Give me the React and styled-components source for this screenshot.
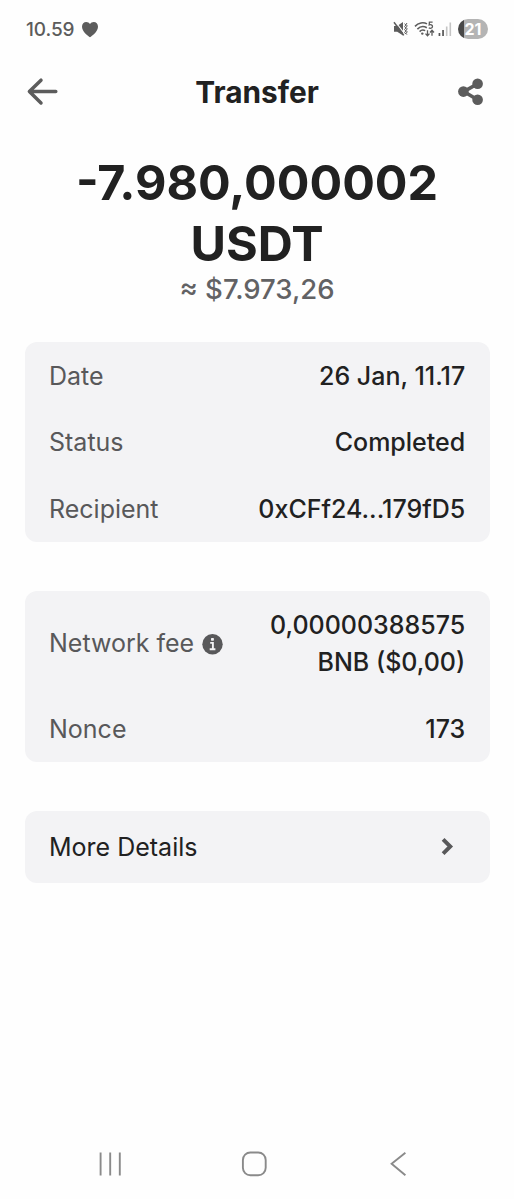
import React from 'react';
import styled, { createGlobalStyle } from 'styled-components';

const feeRows = [
  { label: 'Network fee', value: '0,00000388575 BNB ($0,00)', info: true },
  { label: 'Nonce', value: '173' },
];

const infoRows = [
  { label: 'Date', value: '26 Jan, 11.17' },
  { label: 'Status', value: 'Completed' },
  { label: 'Recipient', value: '0xCFf24...179fD5' },
];

const HeartIcon = () => (
  <svg width="18" height="17" viewBox="0 0 18 17" fill="#5c5c5c">
    <path d="M9 16.3C7.2 15.2 1 10.8 1 5.8C1 3 2.9 1 5.2 1C6.9 1 8.2 1.8 9 3.1C9.8 1.8 11.1 1 12.8 1C15.1 1 17 3 17 5.8C17 10.8 10.8 15.2 9 16.3Z" />
  </svg>
);

const MuteIcon = () => (
  <svg width="16" height="16" viewBox="0 0 16 16" fill="none">
    <path d="M1 5H4.2L10 1V14.6L4.2 10.8H1Z" fill="#5c5c5c" />
    <path d="M2.4 0.6L11.6 12.8" stroke="#fefefe" strokeWidth="1.1" />
    <path d="M1 1.2L10.8 14.4" stroke="#5c5c5c" strokeWidth="1.5" />
    <path d="M11.6 2.6l1.2 1.4-1.2 1.5 1.2 1.5-1.2 1.5 1.2 1.5-1.2 1.5 1.2 1.5M14 2l-.9 1.4 1.1 1.5-1.1 1.5 1.1 1.5-1.1 1.5 1.1 1.5-1.1 1.5 .8 1.2" stroke="#5c5c5c" strokeWidth="1" />
  </svg>
);

const WifiIcon = () => (
  <svg width="21" height="18" viewBox="0 0 21 18" fill="none" stroke="#5c5c5c">
    <path d="M1 6.4C4.4 2.6 9.4 1.8 13 3.9" strokeWidth="1.6" />
    <path d="M3.4 9.1C6 6.4 9.8 5.9 12.8 7.7" strokeWidth="1.6" />
    <path d="M5.6 11.6C7.2 10 9.2 9.7 11.2 10.7" strokeWidth="1.5" />
    <circle cx="8.3" cy="13.6" r="1.2" fill="#5c5c5c" stroke="none" />
    <path d="M18.6 2.1H15.4L15.2 5C16.6 4.3 18.5 4.8 18.5 6.5C18.5 8.4 16 8.8 14.8 7.7" strokeWidth="1.3" />
    <path d="M13.5 10.2V15.6M11.5 13.6L13.5 15.8L15.5 13.6" strokeWidth="1.3" />
    <path d="M18 15.8V10.4M16 12.5L18 10.2L20 12.5" strokeWidth="1.3" />
  </svg>
);

const SignalIcon = () => (
  <svg width="14" height="16" viewBox="0 0 14 16">
    <rect x="-0.4" y="12" width="1.7" height="3" fill="#555" />
    <rect x="3.2" y="9" width="1.7" height="6" fill="#555" />
    <rect x="6.9" y="5.5" width="1.6" height="9.5" fill="#c4c4c4" />
    <rect x="10.5" y="1.5" width="1.6" height="13.5" fill="#c4c4c4" />
  </svg>
);

const BackIcon = () => (
  <svg width="32" height="28" viewBox="0 0 32 28" fill="none" stroke="#5c5c5c" strokeWidth="3.5" strokeLinecap="round" strokeLinejoin="round">
    <path d="M14 2.2L2.4 13.6L14 25M2.4 13.6H28.8" />
  </svg>
);

const ShareIcon = () => (
  <svg width="28" height="28" viewBox="0 0 28 28" fill="#5c5c5c">
    <path d="M20.6 5.7L6.8 13.6L20.6 21.7" fill="none" stroke="#5c5c5c" strokeWidth="3.6" />
    <circle cx="20.6" cy="5.7" r="5.3" />
    <circle cx="6.4" cy="13.6" r="5.3" />
    <circle cx="20.6" cy="21.7" r="5.3" />
  </svg>
);

const InfoIcon = () => (
  <svg width="21" height="21" viewBox="0 0 21 21">
    <circle cx="10.5" cy="10.2" r="10.2" fill="#58585a" />
    <rect x="9" y="4.1" width="2.9" height="2.6" rx="0.6" fill="#f3f3f5" />
    <path d="M8.2 8.9H10.9V15M7.7 15.3H13.4" fill="none" stroke="#f3f3f5" strokeWidth="1.9" />
  </svg>
);

const ChevronIcon = () => (
  <svg width="14" height="20" viewBox="0 0 14 20" fill="none" stroke="#58585a" strokeWidth="3.9">
    <path d="M1.1 2.3L8.3 9.5L1.1 16.7" />
  </svg>
);

const App = () => {
  return (
    <>
      <GlobalStyle />
      <Screen>
        <StatusBar>
          <StatusGroup $gap={7}>
            <Clock>10.59</Clock>
            <HeartIcon />
          </StatusGroup>
          <StatusGroup $gap={4.6}>
            <MuteIcon />
            <WifiIcon />
            <SignalIcon />
            <Battery>21</Battery>
          </StatusGroup>
        </StatusBar>

        <Header>
          <IconButton aria-label="Back"><BackIcon /></IconButton>
          <Title>Transfer</Title>
          <IconButton aria-label="Share"><ShareIcon /></IconButton>
        </Header>

        <Summary>
          <Amount>-7.980,000002 USDT</Amount>
          <FiatAmount>≈ $7.973,26</FiatAmount>
        </Summary>

        <Cards>
          {[infoRows, feeRows].map((rows, index) => (
            <Card key={index}>
              {rows.map(row => (
                <Row key={row.label}>
                  <Label>
                    {row.label}
                    {row.info && <InfoIcon />}
                  </Label>
                  <Value>{row.value}</Value>
                </Row>
              ))}
            </Card>
          ))}
          <MoreButton>
            More Details
            <ChevronIcon />
          </MoreButton>
        </Cards>

        <NavBar>
          <svg width="24" height="26" viewBox="0 0 24 26" stroke="#8a8a8a" strokeWidth="1.9">
            <path d="M2.6 1.5V24.5M12.2 1.5V24.5M21.8 1.5V24.5" />
          </svg>
          <svg width="26" height="26" viewBox="0 0 26 26" fill="none" stroke="#8a8a8a" strokeWidth="1.9">
            <rect x="-0.1" y="1.5" width="22.8" height="22.8" rx="7.5" />
          </svg>
          <svg width="18" height="26" viewBox="0 0 18 26" fill="none" stroke="#8a8a8a" strokeWidth="1.9">
            <path d="M16.4 1.7L2.6 12.8L16.4 24.3" />
          </svg>
        </NavBar>
      </Screen>
    </>
  );
};

// Styled Components
const GlobalStyle = createGlobalStyle`
  * {
    box-sizing: border-box;
  }

  body {
    margin: 0;
    background: #fefefe;
    font-family: Inter, sans-serif;
  }

  svg {
    display: block;
    flex-shrink: 0;
    overflow: visible;
  }
`;

const Screen = styled.div`
  display: flex;
  flex-direction: column;
  width: 514px;
  height: 1199px;
  background: #fefefe;
  color: #212121;
`;

const StatusBar = styled.div`
  display: flex;
  align-items: center;
  justify-content: space-between;
  height: 58px;
  padding: 0 26px;
`;

const StatusGroup = styled.div`
  display: flex;
  align-items: center;
  gap: ${props => props.$gap}px;
`;

const Clock = styled.span`
  font-size: 19px;
  font-weight: 500;
  letter-spacing: -0.1px;
  color: #5c5c5c;
`;

const Battery = styled.div`
  display: flex;
  align-items: center;
  justify-content: center;
  width: 30px;
  height: 20px;
  border-radius: 10px;
  background: linear-gradient(to right, #484848 6px, #b4b4b4 6px);
  color: #fff;
  font-size: 16px;
  font-weight: 700;
`;

const Header = styled.header`
  display: flex;
  align-items: center;
  justify-content: space-between;
  height: 68px;
  padding: 0 29px 0 27px;
`;

const IconButton = styled.button`
  display: flex;
  padding: 0;
  border: none;
  background: none;
`;

const Title = styled.h1`
  margin: 0 2px 0 0;
  font-size: 29.8px;
  font-weight: 700;
`;

const Summary = styled.section`
  display: flex;
  flex-direction: column;
  align-items: center;
  height: 216.4px;
  padding-top: 26px;
  text-align: center;
`;

const Amount = styled.div`
  width: 400px;
  font-size: 48.5px;
  font-weight: 700;
  line-height: 61px;
`;

const FiatAmount = styled.div`
  font-size: 27.5px;
  font-weight: 500;
  line-height: 30px;
  color: #626264;
`;

const Cards = styled.main`
  display: flex;
  flex: 1;
  flex-direction: column;
  gap: 49.1px;
  padding: 0 24.5px;
`;

const Card = styled.section`
  border-radius: 12px;
  background: #f3f3f5;
`;

const Row = styled.div`
  display: flex;
  align-items: center;
  justify-content: space-between;
  padding: 15.4px 24.3px 13.7px 24.5px;
  font-size: 25px;
  line-height: 37.5px;
`;

const Label = styled.div`
  display: flex;
  align-items: center;
  gap: 8px;
  color: #58585a;
`;

const Value = styled.div`
  max-width: 220px;
  font-weight: 500;
  text-align: right;
`;

const MoreButton = styled.button`
  display: flex;
  align-items: center;
  justify-content: space-between;
  height: 72.5px;
  padding: 0 34px 0 24.5px;
  border: none;
  border-radius: 12px;
  background: #f3f3f5;
  color: #212121;
  font-family: inherit;
  font-size: 25px;
`;

const NavBar = styled.nav`
  display: flex;
  align-items: center;
  justify-content: space-between;
  height: 70px;
  padding: 0 107px 0 98px;
`;

export default App;
